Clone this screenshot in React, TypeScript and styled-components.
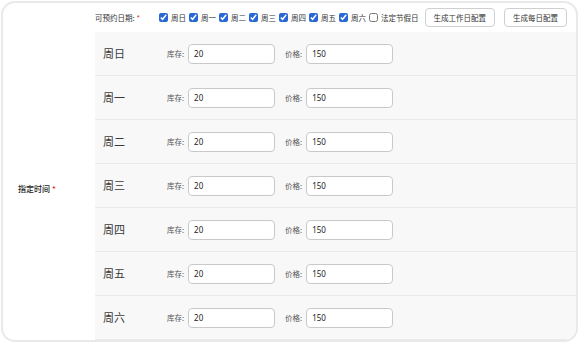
import styled, { createGlobalStyle } from 'styled-components'

const GlobalStyle = createGlobalStyle`
    html, body{
        margin: 0;
        padding: 0;
        background: #fff;
    }
    body{
        font-family: "Noto Sans CJK SC", "Noto Sans", sans-serif;
        color: #333;
    }
`

const Card = styled.div`
    box-sizing: border-box;
    margin: 1px 0 0 1px;
    width: 577px;
    height: 341px;
    border: 2px solid #e9e9e9;
    border-radius: 14px;
    overflow: hidden;
    display: grid;
    grid-template-columns: 92px 1fr;
    grid-template-rows: 29px 1fr;
`

const TopBar = styled.div`
    grid-column: 2;
    display: flex;
    align-items: center;
    gap: 3px;
    font-size: 7.5px;
    color: #333;
`

const FieldLabel = styled.span<{ $gap?: number }>`
    margin-right: ${p => p.$gap ?? 0}px;
    white-space: nowrap;
`

const Star = styled.span`
    color: #e02020;
    margin-left: 2px;
`

const DayCheck = styled.label`
    display: flex;
    align-items: center;
    gap: 3px;
    white-space: nowrap;

    input{
        margin: 0;
        width: 9px;
        height: 9px;
        accent-color: #2767d6;
    }
`

const Button = styled.button<{ $first?: boolean }>`
    font-family: inherit;
    font-size: 7.5px;
    color: #333;
    background: #fff;
    border: 1px solid #cfcfcf;
    border-radius: 4px;
    height: 19px;
    padding: 0 8px;
    white-space: nowrap;
    flex-shrink: 0;
    margin-left: ${p => p.$first ? 3 : 6}px;
`

const SideLabel = styled.div`
    grid-column: 1;
    grid-row: 2;
    display: flex;
    align-items: center;
    padding-left: 15px;
    padding-top: 4px;
    font-size: 8px;
    font-weight: 500;
    color: #222;
`

const DayList = styled.div`
    grid-column: 2;
    grid-row: 2;
    background: #f8f8f8;
    display: flex;
    flex-direction: column;
`

const DayRow = styled.div`
    height: 43px;
    flex-shrink: 0;
    border-bottom: 1px solid #ebebeb;
    display: flex;
    align-items: center;
    padding-left: 8px;
`

const DayName = styled.div`
    width: 64px;
    font-size: 11px;
    color: #3a3a3a;
    margin-top: -2px;
`

const SmallLabel = styled.span`
    font-size: 7.5px;
    color: #555;
    margin-right: 4px;
`

const Input = styled.input`
    box-sizing: border-box;
    width: 87px;
    height: 20px;
    border: 1px solid #c9c9c9;
    border-radius: 4px;
    background: #fff;
    padding: 0 5px;
    font-family: "Noto Sans", sans-serif;
    font-size: 8px;
    color: #222;
    margin-right: 10px;
    outline: none;
`

const days = ['周日', '周一', '周二', '周三', '周四', '周五', '周六']

export default function App() {
    return (
        <>
            <GlobalStyle />
            <Card>
                <TopBar>
                    <FieldLabel $gap={16}>可预约日期:<Star>*</Star></FieldLabel>
                    {days.map(d => (
                        <DayCheck key={d}>
                            <input type="checkbox" defaultChecked />
                            {d}
                        </DayCheck>
                    ))}
                    <DayCheck>
                        <input type="checkbox" />
                        法定节假日
                    </DayCheck>
                    <Button $first>生成工作日配置</Button>
                    <Button>生成每日配置</Button>
                </TopBar>
                <SideLabel>
                    指定时间<Star>*</Star>
                </SideLabel>
                <DayList>
                    {days.map(d => (
                        <DayRow key={d}>
                            <DayName>{d}</DayName>
                            <SmallLabel>库存:</SmallLabel>
                            <Input defaultValue="20" />
                            <SmallLabel>价格:</SmallLabel>
                            <Input defaultValue="150" />
                        </DayRow>
                    ))}
                </DayList>
            </Card>
        </>
    )
}
